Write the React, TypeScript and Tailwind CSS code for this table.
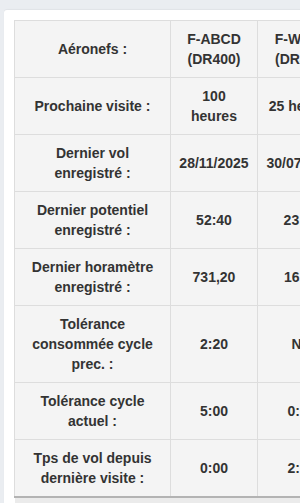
import React from "react";

const rows: { label: string; a: string; b: string }[] = [
  { label: "Prochaine visite :", a: "100 heures", b: "25 heures" },
  { label: "Dernier vol enregistré :", a: "28/11/2025", b: "30/07/2025" },
  { label: "Dernier potentiel enregistré :", a: "52:40", b: "23:40" },
  { label: "Dernier horamètre enregistré :", a: "731,20", b: "16,40" },
  { label: "Tolérance consommée cycle prec. :", a: "2:20", b: "NA" },
  { label: "Tolérance cycle actuel :", a: "5:00", b: "0:00" },
  { label: "Tps de vol depuis dernière visite :", a: "0:00", b: "2:00" },
];

const cell =
  "border border-[#dddddd] bg-[#f4f4f4] px-[8px] py-[8px] text-center align-middle font-bold text-[14px] leading-[20px] text-[#333333]";

export default function App() {
  return (
    <div
      className="min-h-screen h-[503px] overflow-hidden bg-[#eaedf1] pl-[4px] pt-[10px]"
      style={{ fontFamily: '"Liberation Sans", Arial, sans-serif' }}
    >
      <div className="w-max rounded-tl-[3px] bg-white p-[10px] shadow-[0_-1px_1px_rgba(0,0,0,0.04)]">
        <table className="border-collapse">
          <colgroup>
            <col className="w-[156px]" />
            <col className="w-[87px]" />
            <col className="w-[88px]" />
            <col className="w-[88px]" />
          </colgroup>
          <tbody>
            <tr>
              <td className={cell}>Aéronefs :</td>
              <td className={cell}>
                F-ABCD
                <br />
                (DR400)
              </td>
              <td className={cell}>
                F-WXYZ
                <br />
                (DR400)
              </td>
              <td className={cell}>
                F-GHIJ
                <br />
                (C150)
              </td>
            </tr>
            {rows.map((r) => (
              <tr key={r.label}>
                <td className={cell}>{r.label}</td>
                <td className={cell}>{r.a}</td>
                <td className={cell}>{r.b}</td>
                <td className={cell}>{r.b}</td>
              </tr>
            ))}
            <tr>
              <td className="border-t-2 border-[#b3b3b3] bg-[#ebebeb] h-[40px]" colSpan={4}></td>
            </tr>
          </tbody>
        </table>
      </div>
    </div>
  );
}
